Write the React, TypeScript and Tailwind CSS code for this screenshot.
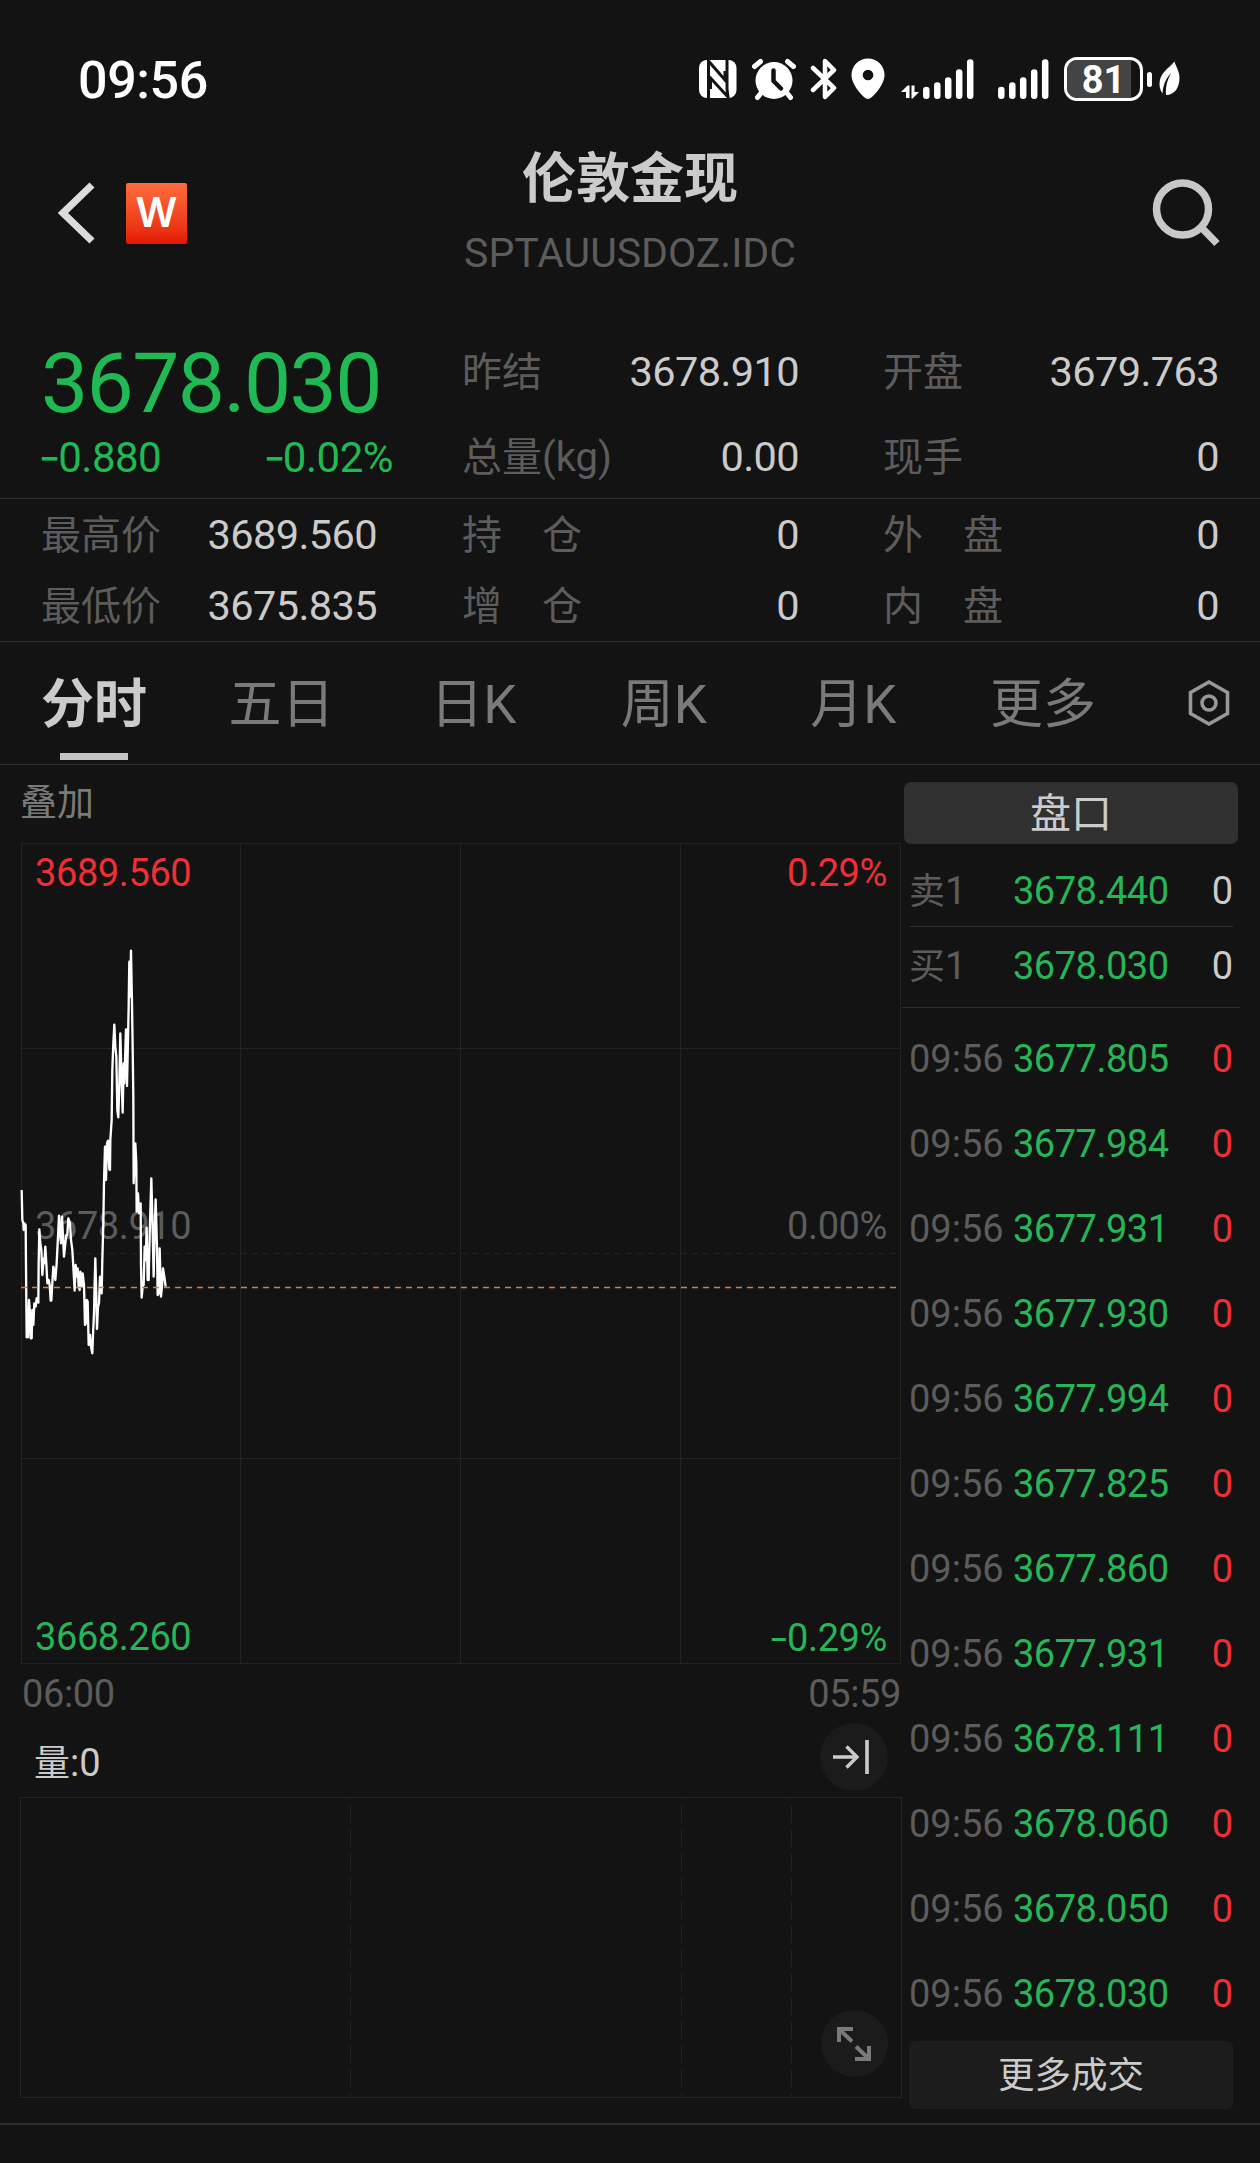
import { useState } from "react";

interface QuoteItem {
  label: string;
  value: string;
}

interface Tick {
  time: string;
  price: string;
  volume: number;
}

const TABS = [
  { name: "分时", width: "w-[188px]" },
  { name: "五日", width: "w-[187px]" },
  { name: "日K", width: "w-[197px]" },
  { name: "周K", width: "w-[184px]" },
  { name: "月K", width: "w-[195px]" },
  { name: "更多", width: "w-[184px]" },
];

const TICKS: Tick[] = [
  "3677.805",
  "3677.984",
  "3677.931",
  "3677.930",
  "3677.994",
  "3677.825",
  "3677.860",
  "3677.931",
  "3678.111",
  "3678.060",
  "3678.050",
  "3678.030",
].map((price) => ({ time: "09:56", price, volume: 0 }));

// x,y pairs in thirds of a pixel
const PRICE_LINE =
  "35,780 37,870 40,880 41,900 43,880 47,885 48,1010 50,1222 53,1170 54,1222 57,1110 60,1150 62,1225 65,1225 67,1140 70,1185 73,1120 77,1130 80,1105 85,1118 86,1000 88,898 91,940 94,960 97,1035 101,985 103,1000 106,950 109,1000 112,1060 116,1050 119,1065 122,1112 124,1112 127,1060 130,1010 133,1020 136,1050 140,1000 144,920 147,857 150,910 153,940 156,860 158,900 162,980 166,940 169,915 172,915 175,865 180,880 183,930 187,960 190,1010 194,1082 197,1005 200,1040 203,1015 206,1070 209,1080 211,1025 215,1070 218,1030 222,1065 225,1185 228,1180 230,1110 233,1115 236,1245 240,1215 243,1250 247,1270 249,1215 252,1150 254,1060 256,985 259,1100 261,1197 264,1130 267,1120 270,1040 273,1085 275,1090 277,990 280,880 282,760 285,650 288,750 291,640 294,632 298,718 300,720 301,630 305,570 307,420 310,340 313,284 316,350 319,380 322,540 325,562 328,460 331,310 335,460 338,548 341,400 343,460 348,298 351,468 354,330 356,230 358,95 360,200 363,62 366,220 368,350 370,500 371,760 374,700 376,640 379,700 380,845 384,790 387,850 392,820 393,1000 395,1103 398,1070 401,1065 404,950 407,990 410,893 413,1050 416,1050 420,880 424,745 428,900 431,1040 434,900 437,808 441,950 443,1095 447,1090 449,955 453,1100 456,1070 459,1015 463,1040 467,1070";

export default function App() {
  return (
    <div className="w-[1260px] h-[2163px] overflow-hidden bg-[#131313] text-[#cbcbcb] font-[Roboto,'Noto_Sans_CJK_SC',sans-serif] whitespace-nowrap">
      <StatusBar />
      <Header />
      <QuoteSummary />
      <PeriodTabs />
      <div className="flex h-[1358px]">
        <div className="w-[902px]">
          <div className="h-[78px] pt-[14px] pl-[20px] text-[37px] leading-[50px] text-[#7a7a7a]">
            叠加
          </div>
          <PriceChart />
          <div className="flex justify-between h-[58px] pl-[22px] pr-[1px] text-[38px] leading-[60px] tracking-[-0.4px] text-[#5c5c5c]">
            <span>06:00</span>
            <span>05:59</span>
          </div>
          <VolumeChart />
        </div>
        <OrderBook />
      </div>
      <div className="h-[2px] bg-[#2e2e2e]" />
    </div>
  );
}

function StatusBar() {
  return (
    <div className="flex justify-between items-center h-[138px] pt-[20px] pl-[78px] pr-[79px] text-white">
      <span className="pt-[3px] text-[52px] font-medium tracking-[-0.4px]">09:56</span>
      <div className="flex items-center h-[44px]">
        <svg width="38" height="44" viewBox="0 0 38 44">
          <rect x="0" y="3" width="37.500" height="38" rx="8" fill="#fff" />
          <path d="M9.500 41V4L26 23V14M28 3V32L29 40L11.500 21V32" fill="none" stroke="#131313" strokeWidth="3" />
        </svg>
        <svg className="ml-[15px]" width="44" height="44" viewBox="0 0 44 44">
          <circle cx="22" cy="23.500" r="18.500" fill="#fff" />
          <path d="M2.500 9.500L8.500 4.500M41.500 9.500L35.500 4.500M9 36L5.500 40.500M35 36L38.500 40.500" stroke="#fff" strokeWidth="5" strokeLinecap="round" />
          <path d="M21.500 13.500V24L29 31.500" fill="none" stroke="#131313" strokeWidth="4.500" strokeLinecap="round" strokeLinejoin="round" />
        </svg>
        <svg className="ml-[14px]" width="28" height="44" viewBox="0 0 28 44">
          <path d="M3 11L24 31L15 40V4L24 13L3 33" fill="none" stroke="#fff" strokeWidth="4.500" strokeLinecap="round" strokeLinejoin="round" />
        </svg>
        <svg className="ml-[13px]" width="34" height="44" viewBox="0 0 34 44">
          <path d="M17 42C13 42 0.500 28 0.500 18A16.500 16.500 0 0 1 33.500 18C33.500 28 21 42 17 42Z" fill="#fff" />
          <circle cx="17" cy="18" r="5.300" fill="#131313" />
        </svg>
        <svg className="ml-[16px]" width="19" height="44" viewBox="0 0 19 44">
          <path d="M0 35L6.500 28.500H8.500V41H5V35ZM10.500 28.500H13.500V35H18L11.500 41.500H10.500Z" fill="#fff" />
        </svg>
        <SignalBars className="ml-[3px]" />
        <SignalBars className="ml-[24px]" />
        <div className="relative flex items-center ml-[15px]">
          <div className="flex w-[79px] h-[44px] rounded-[13px] border-[3px] border-white overflow-hidden">
            <div className="w-[64px] h-full bg-[#444]" />
          </div>
          <span className="absolute left-0 w-[79px] pt-px text-center text-[38px] leading-[44px] font-bold">
            81
          </span>
          <div className="ml-[4px] w-[5px] h-[15px] rounded-full bg-white" />
        </div>
        <svg className="ml-[7px]" width="22" height="44" viewBox="0 0 22 44">
          <path d="M15.500 4.500C9 12 0.500 16 0.500 27C0.500 31 2 34.500 3.500 36.500C4 28 7 21 12.500 15.500C8 23 6.500 30 7 38C16 38 20.500 30 20.500 21C20.500 14 17 10 15.500 4.500Z" fill="#fff" />
        </svg>
      </div>
    </div>
  );
}

function SignalBars(props: { className: string }) {
  return (
    <svg className={props.className} width="51" height="44" viewBox="0 0 51 44">
      <path d="M3.300 33V38.800M14.300 28.500V38.800M25.200 23.500V38.800M36.200 15.500V38.800M47.200 5.500V38.800" stroke="#fff" strokeWidth="6.500" strokeLinecap="round" />
    </svg>
  );
}

function Header() {
  return (
    <div className="flex items-center justify-between h-[150px] pl-[58px] pr-[40px]">
      <div className="flex items-center gap-[31px] w-[182px]">
        <svg width="37" height="62" viewBox="0 0 37 62">
          <path d="M34 3L5 31L34 59" fill="none" stroke="#dcdcdc" strokeWidth="7.200" />
        </svg>
        <div className="flex items-center justify-center w-[61px] h-[61px] rounded-[2px] bg-linear-to-b from-[#ff6b3b] to-[#e41400] font-[Inter] font-semibold text-[41px] text-white">
          W
        </div>
      </div>
      <div className="flex flex-col items-center">
        <div className="h-[78px] pt-[2px] text-[54px] leading-[80px] font-bold">
          伦敦金现
        </div>
        <div className="h-[72px] text-[41px] leading-[74px] text-[#5c5c5c]">
          SPTAUUSDOZ.IDC
        </div>
      </div>
      <div className="flex justify-end w-[200px]">
        <svg width="68" height="68" viewBox="0 0 68 68">
          <circle cx="30.500" cy="30" r="26" fill="none" stroke="#c8c8c8" strokeWidth="7.500" />
          <path d="M48 47L65 64.500" stroke="#c8c8c8" strokeWidth="7.500" />
        </svg>
      </div>
    </div>
  );
}

function Minus() {
  return <span className="inline-block origin-right scale-x-115 font-[Inter] tracking-[-0.05em]">-</span>;
}

function QuoteCell(props: QuoteItem & { className: string }) {
  return (
    <div className={`flex justify-between items-center ${props.className}`}>
      <span className="pt-[3px] text-[40px] text-[#5c5c5c]">{props.label}</span>
      <span className="pt-[2px] text-[41.500px] tracking-[-0.6px]">{props.value}</span>
    </div>
  );
}

function QuoteSummary() {
  const second = "w-[421px] pr-[84px]";
  const third = "w-[377px] pr-[41px]";

  return (
    <div>
      <div className="flex h-[211px] pt-[40px] border-b border-[#2e2e2e]">
        <div className="w-[462px] pl-[41px] text-[#20b954]">
          <div className="h-[86px] pt-[13px] text-[84px] leading-[86px] tracking-[-1.6px]">
            3678.030
          </div>
          <div className="flex justify-between w-[352px] h-[84px] text-[42px] leading-[85px] tracking-[-0.5px]">
            <span>
              <Minus />
              0.880
            </span>
            <span>
              <Minus />
              0.02%
            </span>
          </div>
        </div>
        <div>
          <div className="flex h-[86px]">
            <QuoteCell className={second} label="昨结" value="3678.910" />
            <QuoteCell className={third} label="开盘" value="3679.763" />
          </div>
          <div className="flex h-[84px]">
            <QuoteCell className={second} label="总量(kg)" value="0.00" />
            <QuoteCell className={third} label="现手" value="0" />
          </div>
        </div>
      </div>
      <div className="h-[143px] border-b border-[#2e2e2e]">
        <div className="flex h-[71px]">
          <QuoteCell className="w-[462px] pl-[41px] pr-[85px]" label="最高价" value="3689.560" />
          <QuoteCell className={second} label="持　仓" value="0" />
          <QuoteCell className={third} label="外　盘" value="0" />
        </div>
        <div className="flex h-[71px]">
          <QuoteCell className="w-[462px] pl-[41px] pr-[85px]" label="最低价" value="3675.835" />
          <QuoteCell className={second} label="增　仓" value="0" />
          <QuoteCell className={third} label="内　盘" value="0" />
        </div>
      </div>
    </div>
  );
}

function PeriodTabs() {
  const [selected, setSelected] = useState<string>("分时");

  return (
    <div className="flex h-[123px] border-b border-[#2e2e2e]">
      {TABS.map((tab) => (
        <div
          key={tab.name}
          className={`relative flex items-center justify-center pt-[5px] text-[53px] ${tab.width} ${
            tab.name === selected ? "font-bold" : "text-[#7a7a7a]"
          }`}
          onClick={() => setSelected(tab.name)}
        >
          {tab.name}
          {tab.name === selected && (
            <div className="absolute bottom-[4px] w-[68px] h-[7px] bg-[#c4c2c4]" />
          )}
        </div>
      ))}
      <div className="flex flex-1 items-center justify-end pr-[30px]">
        <svg width="42" height="46" viewBox="0 0 42 46">
          <path d="M21 2L39.500 12.500V33.500L21 44L2.500 33.500V12.500Z" fill="none" stroke="#989898" strokeWidth="3.600" />
          <circle cx="21" cy="23" r="7" fill="none" stroke="#989898" strokeWidth="3.600" />
        </svg>
      </div>
    </div>
  );
}

function PriceChart() {
  return (
    <div className="relative h-[821px] text-[38px] leading-[44px] tracking-[-0.4px]">
      <span className="absolute left-[35px] top-[361px] text-[#5c5c5c]">3678.910</span>
      <span className="absolute right-[15px] top-[361px] text-[#5c5c5c]">0.00%</span>
      <svg className="absolute left-0 top-0" width="902" height="821" viewBox="0 0 902 821">
        <g fill="none" stroke="#232323" strokeWidth="1">
          <rect x="21.500" y="0.500" width="879" height="820" />
          <path d="M240.500 0V820M460.500 0V820M680.500 0V820M21 205.500H900M21 615.500H900" />
          <path d="M21 410.500H900" strokeDasharray="6 5" />
        </g>
        <g transform="translate(10 87) scale(0.3333)">
          <polyline points={PRICE_LINE} fill="none" stroke="#fff" strokeWidth="7" strokeLinejoin="round" />
        </g>
        <path d="M21 444.500H901" stroke="#d08040" strokeWidth="1.400" strokeDasharray="6 5" />
      </svg>
      <span className="absolute left-[35px] top-[8px] text-[#ee3036]">3689.560</span>
      <span className="absolute right-[15px] top-[8px] text-[#ee3036]">0.29%</span>
      <span className="absolute left-[35px] top-[772px] text-[#27b558]">3668.260</span>
      <span className="absolute right-[15px] top-[772px] text-[#27b558]">
        <Minus />
        0.29%
      </span>
    </div>
  );
}

function VolumeChart() {
  return (
    <>
      <div className="flex justify-between h-[75px] pl-[34px] pr-[14px]">
        <span className="pt-[4px] text-[36px] leading-[75px]">
          量<span className="text-[38px]">:0</span>
        </span>
        <div className="flex items-center justify-center mt-[1px] pr-[6px] w-[68px] h-[68px] rounded-full bg-[#1b1b1b]">
          <svg width="38" height="36" viewBox="0 0 38 36">
            <path d="M1 18H25M14.500 7.500L25 18L14.500 28.500" fill="none" stroke="#cbcbcb" strokeWidth="3.400" />
            <path d="M35 1V35" stroke="#cbcbcb" strokeWidth="3.600" />
          </svg>
        </div>
      </div>
      <div className="relative h-[301px]">
        <svg width="902" height="301" viewBox="0 0 902 301">
          <g fill="none" stroke="#232323" strokeWidth="1">
            <rect x="20.500" y="0.500" width="881" height="300" />
            <path d="M350.500 0V300M681.500 0V300M791.500 0V300" strokeDasharray="17 7" strokeDashoffset="-9" />
          </g>
        </svg>
        <div className="absolute right-[14px] bottom-[21px] flex items-center justify-center pr-[2px] w-[67px] h-[67px] rounded-full bg-[#1b1b1b]">
          <svg width="34" height="34" viewBox="0 0 34 34">
            <path d="M2 15V2H16M2 2L15 14.500M32 19V32H18M32 32L19 19.500" fill="none" stroke="#7a7a7a" strokeWidth="4" />
          </svg>
        </div>
      </div>
    </>
  );
}

function BookRow(props: QuoteItem) {
  return (
    <div className="flex justify-between">
      <span className="w-[104px] text-[#5c5c5c]">
        <span className="text-[36px]">{props.label}</span>1
      </span>
      <span className="flex-1 tracking-[-0.5px] text-[#27b558]">{props.value}</span>
      <span>0</span>
    </div>
  );
}

function OrderBook() {
  return (
    <div className="w-[338px] pt-[17px] text-[38px]">
      <div className="ml-[2px] mr-[2px] h-[62px] rounded-[7px] bg-[#303030] text-center text-[41px] leading-[65px]">
        盘口
      </div>
      <div className="mx-[7px] mt-[6px] h-[77px] leading-[82px] border-b border-[#2e2e2e]">
        <BookRow label="卖" value="3678.440" />
      </div>
      <div className="px-[7px] h-[81px] leading-[78px] border-b border-[#2e2e2e]">
        <BookRow label="买" value="3678.030" />
      </div>
      <div className="mt-[8px] px-[7px]">
        {TICKS.map((tick, index) => (
          <div key={index} className="flex h-[85px] leading-[86px]">
            <span className="w-[104px] text-[#5c5c5c]">{tick.time}</span>
            <span className="flex-1 tracking-[-0.5px] text-[#27b558]">
              {tick.price}
            </span>
            <span className="text-[#ee3036]">{tick.volume}</span>
          </div>
        ))}
      </div>
      <div className="mx-[7px] mt-[5px] h-[68px] rounded-[6px] bg-[#1c1c1c] text-center text-[36.500px] leading-[70px]">
        更多成交
      </div>
    </div>
  );
}
